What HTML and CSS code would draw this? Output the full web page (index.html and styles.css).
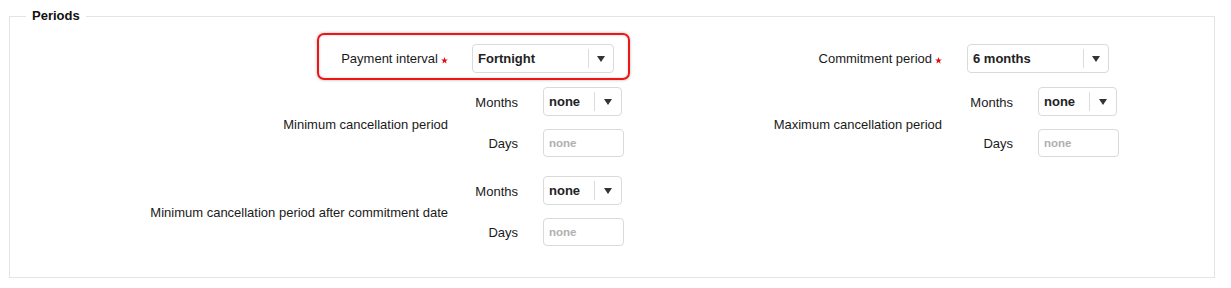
FILE: index.html
```html
<!DOCTYPE html>
<html>
<head>
<meta charset="utf-8">
<link rel="stylesheet" href="styles.css">
</head>
<body>
<div class="page">
  <fieldset class="periods">
    <legend>Periods</legend>
    <div class="row row-first">
      <div class="highlight"></div>
      <div class="label">Payment interval<svg class="req" viewBox="0 0 10 10" width="7" height="7"><polygon points="5,0 6.2,3.4 9.8,3.5 7,5.7 8,9.3 5,7.2 2,9.3 3,5.7 0.2,3.5 3.8,3.4" fill="#e01010"/></svg></div>
      <div class="field">
        <div class="select select-lg"><span class="val">Fortnight</span><span class="arrow"><i></i></span></div>
      </div>
      <div class="label label-right">Commitment period<svg class="req" viewBox="0 0 10 10" width="7" height="7"><polygon points="5,0 6.2,3.4 9.8,3.5 7,5.7 8,9.3 5,7.2 2,9.3 3,5.7 0.2,3.5 3.8,3.4" fill="#e01010"/></svg></div>
      <div class="field">
        <div class="select select-lg"><span class="val">6 months</span><span class="arrow"><i></i></span></div>
      </div>
    </div>

    <div class="row row-second">
      <div class="label">Minimum cancellation period</div>
      <div class="nested">
        <div class="sublabel">Months</div>
        <div class="select select-sm"><span class="val">none</span><span class="arrow"><i></i></span></div>
        <div class="sublabel">Days</div>
        <div class="input"><span class="ph">none</span></div>
      </div>
      <div class="label label-right">Maximum cancellation period</div>
      <div class="nested">
        <div class="sublabel">Months</div>
        <div class="select select-sm"><span class="val">none</span><span class="arrow"><i></i></span></div>
        <div class="sublabel">Days</div>
        <div class="input"><span class="ph">none</span></div>
      </div>
    </div>

    <div class="row row-third">
      <div class="label">Minimum cancellation period after commitment date</div>
      <div class="nested">
        <div class="sublabel">Months</div>
        <div class="select select-sm"><span class="val">none</span><span class="arrow"><i></i></span></div>
        <div class="sublabel">Days</div>
        <div class="input"><span class="ph">none</span></div>
      </div>
    </div>
  </fieldset>
</div>
</body>
</html>
```

FILE: styles.css
```css
html, body {
  margin: 0;
  padding: 0;
  background: #ffffff;
}

body {
  font-family: "Liberation Sans", Arial, sans-serif;
  font-size: 13px;
  color: #1a1a1a;
}

.page {
  padding: 8px 16px 0 9px;
}

.periods {
  margin: 0;
  padding: 0 0 25px 0;
  border: 1px solid #e4e4e4;
  min-width: 0;
}

.periods legend {
  margin-left: 16px;
  padding: 0 6px;
  font-weight: bold;
  font-size: 13px;
  line-height: 16px;
  color: #111111;
}

.row {
  display: grid;
  grid-template-columns: 462px 228px 267px 1fr;
  align-items: center;
  position: relative;
}

.row-first {
  margin-top: 14px;
  height: 41px;
}

.row-second {
  margin-top: 2px;
}

.row-third {
  margin-top: 7px;
}

.label {
  text-align: right;
  padding-right: 24px;
  line-height: 16px;
  white-space: nowrap;
}

.row-first .label {
  padding-top: 1px;
}

.row-second .label {
  padding-top: 6px;
}

.row-third .label {
  padding-top: 3px;
}

.label-right {
  padding-right: 25px;
}

.req {
  margin-left: 3px;
  vertical-align: -1px;
}

.highlight {
  position: absolute;
  left: 307px;
  top: -5px;
  width: 313px;
  height: 47px;
  box-sizing: border-box;
  border: 2px solid #f01515;
  border-radius: 7px;
  box-shadow: 0 0 3px rgba(0, 0, 0, 0.3), inset 0 0 3px rgba(0, 0, 0, 0.18);
  pointer-events: none;
}

.field {
  display: flex;
  align-items: center;
}

.select {
  display: flex;
  align-items: stretch;
  box-sizing: border-box;
  height: 29px;
  border: 1px solid #dadada;
  border-radius: 4px;
  background: #fff;
}

.select-lg {
  width: 142px;
}

.select-sm {
  width: 79px;
}

.select .val {
  flex: 1;
  display: flex;
  align-items: center;
  padding-left: 5px;
  font-weight: bold;
  font-size: 13px;
  color: #222;
}

.select .arrow {
  display: flex;
  align-items: center;
  justify-content: center;
  margin: 4px 0;
  border-left: 1px solid #dcdcdc;
}

.select-lg .arrow {
  width: 24px;
}

.select-sm .arrow {
  width: 26px;
}

.select .arrow i {
  display: block;
  width: 0;
  height: 0;
  border-left: 4px solid transparent;
  border-right: 4px solid transparent;
  border-top: 6px solid #333;
}

.nested {
  display: grid;
  grid-template-columns: 71px auto;
  grid-auto-rows: 41px;
  align-items: center;
  justify-items: start;
}

.sublabel {
  justify-self: stretch;
  text-align: right;
  padding-right: 25px;
  padding-top: 2px;
  line-height: 16px;
}

.input {
  box-sizing: border-box;
  width: 81px;
  height: 28px;
  border: 1px solid #dadada;
  border-radius: 4px;
  display: flex;
  align-items: center;
  padding-left: 5px;
}

.input .ph {
  font-weight: bold;
  font-size: 11.5px;
  color: #b0b0b0;
}
```
